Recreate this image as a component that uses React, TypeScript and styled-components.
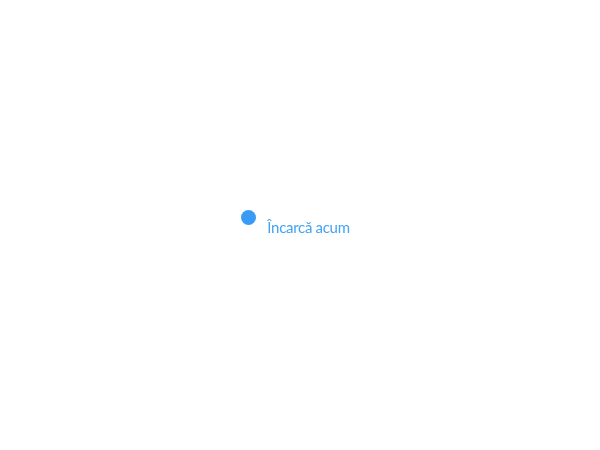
import React from 'react';
import styled, { createGlobalStyle } from 'styled-components';

const GlobalStyle = createGlobalStyle`
  html, body {
    margin: 0;
    padding: 0;
    background: #ffffff;
    font-family: "Lato", "Noto Sans", sans-serif;
  }
`;

// tall page behind the loader
const Page = styled.main`
  min-height: 1744px;
  background: #ffffff;
`;

const Overlay = styled.div`
  position: fixed;
  inset: 0;
  display: flex;
  align-items: center;
  justify-content: center;
  background: rgba(255, 255, 255, 0.98);
`;

const Loader = styled.div`
  display: flex;
  align-items: flex-start;
  gap: 11px;
  margin: 0 9px 4px 0;
`;

const Dot = styled.span`
  display: block;
  width: 15px;
  height: 15px;
  border-radius: 50%;
  background: #3a9bf7;
`;

const Label = styled.span`
  margin-top: 8px;
  font-size: 15px;
  line-height: 18px;
  letter-spacing: -0.3px;
  color: #45a3f2;
`;

const App: React.FC = () => {
  return (
    <>
      <GlobalStyle />
      <Page />
      <Overlay>
        <Loader>
          <Dot />
          <Label>Încarcă acum</Label>
        </Loader>
      </Overlay>
    </>
  );
};

export default App;
